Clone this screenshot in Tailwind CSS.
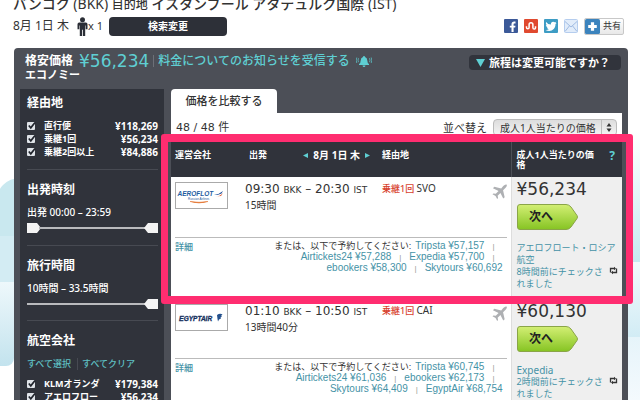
<!DOCTYPE html>
<html lang="ja">
<head>
<meta charset="utf-8">
<title>バンコク - イスタンブール</title>
<script src="https://cdn.jsdelivr.net/npm/@tailwindcss/browser@4"></script>
</head>
<body class="relative h-screen overflow-hidden bg-white font-['Noto_Sans','Noto_Sans_CJK_JP',sans-serif] text-[#333] text-[9px] leading-3">
<div class="absolute inset-0 -z-10 overflow-hidden" aria-hidden="true">
  <div class="absolute -left-1 top-[178px] h-[68px] w-12 rounded-full bg-[#c9e8ef]"></div>
  <div class="absolute left-0 top-[236px] h-[46px] w-8 bg-[#d3ecf3]"></div>
  <div class="absolute left-0 top-[282px] h-[84px] w-[14px] rounded-br-lg bg-linear-to-b from-[#eef8fb] to-[#c3e3ee]"></div>
  <div class="absolute right-0 top-[130px] h-[132px] w-3 bg-linear-to-b from-white to-[#c6eaf1]"></div>
  <div class="absolute right-0 top-[262px] h-[75px] w-3 bg-linear-to-b from-[#f2fafc] to-[#d2ecf5]"></div>
  <div class="absolute right-0 top-[337px] h-[63px] w-3 bg-linear-to-b from-[#e6f4fa] to-[#f4fafd]"></div>
</div>

<header class="pl-[13px] pr-4">
  <h1 class="-mt-1.5 h-[22px] whitespace-nowrap text-sm font-medium leading-5">バンコク <span class="font-normal">(BKK)</span> <span class="text-xs">目的地</span> イスタンブール アタテュルク国際 <span class="font-normal">(IST)</span></h1>
  <div class="flex h-5 items-center justify-between">
    <div class="flex items-center">
      <span class="text-xs">8月 1日 木</span>
      <svg class="ml-2 h-[19px] w-[11px]" viewBox="0 0 11 19" fill="#2b2e36"><circle cx="5.5" cy="2.8" r="2.5"/><path d="M2.200 5.600h6.600q1.700 0 1.700 1.700v5H8.700V8.500H8.200V19H5.900v-6.200h-.8V19H2.800V8.500H2.300v3.800H.5v-5q0-1.700 1.700-1.700z"/></svg>
      <span class="text-[11px]">x 1</span>
      <button class="ml-1.5 h-[19px] w-[118px] rounded-[4px] bg-[#2d3038] text-[10px] font-bold text-white">検索変更</button>
    </div>
    <div class="flex items-center gap-1.5">
      <a href="#" aria-label="Facebook"><svg class="size-3.5" viewBox="0 0 14 14"><rect width="14" height="14" rx="1" fill="#3b5998"/><path d="M7.500 13V8.600H5.800V6.700h1.700V5.300c0-1.900 1-2.800 2.700-2.800h1.300v1.900h-1c-.7 0-.9.3-.9.9v1.400h1.900l-.3 1.900H9.600V13z" fill="#fff"/></svg></a>
      <a href="#" aria-label="StumbleUpon"><svg class="size-3.5" viewBox="0 0 14 14"><rect width="14" height="14" rx="1" fill="#e0492f"/><path d="M2.500 7.200v1.300a1.300 1.300 0 0 0 2.600 0V5.600a1.900 1.900 0 0 1 3.800 0v3.100a1.300 1.300 0 0 0 2.600 0V7.200" fill="none" stroke="#fff" stroke-width="1.500"/></svg></a>
      <a href="#" aria-label="Twitter"><svg class="size-3.5" viewBox="0 0 14 14"><rect width="14" height="14" rx="1" fill="#3d9cc4"/><path d="M12.600 3.900l-1.200.2.900-1.300-1.500.5A2.400 2.400 0 0 0 6.900 5.600 6 6 0 0 1 2.200 2.900c-.6 1.200-.3 2.500.7 3.300l-1-.3c0 1.200.8 2.200 1.900 2.400l-1 .1c.3.9 1.100 1.500 2.200 1.600A4.600 4.600 0 0 1 1.500 11c4.900 2.800 10.200-.4 10-5.900z" fill="#fff"/></svg></a>
      <a href="#" aria-label="メール"><svg class="size-3.5" viewBox="0 0 14 14"><rect x=".5" y=".5" width="13" height="13" rx="1" fill="#e1ecfa" stroke="#b5cdee"/><path d="M1 2.500l6 5.500 6-5.500M1 12.500l4.500-5.700M13 12.500L8.500 6.800" fill="none" stroke="#9fbbe3"/></svg></a>
      <button class="flex h-[17px] w-10 items-center gap-[3px] rounded-[2px] border border-[#c8c8c8] bg-linear-to-b from-white to-[#e8e8e8] text-[9px]"><svg class="size-[15px] shrink-0" viewBox="0 0 14 14" aria-hidden="true"><rect width="14" height="14" rx="1.500" fill="#3b83bd"/><path d="M5.500 3h3v2.500H11v3H8.500V11h-3V8.500H3v-3h2.500z" fill="#fff"/></svg>共有</button>
    </div>
  </div>
</header>

<main class="ml-3.5 mr-3 mt-3 rounded-t-[4px] bg-[#4c4f57] px-1.5">
  <div class="flex h-[41px] items-start justify-between pl-[5px] pr-[1px] pt-[5px] text-white">
    <div>
      <div class="flex h-4 items-center text-xs font-bold">格安価格<strong class="ml-1.5 font-['DejaVu_Sans','Noto_Sans_CJK_JP',sans-serif] text-[17px] font-normal leading-4 text-[#5fcfd3]">¥56,234</strong>
        <a href="#" class="ml-1 flex items-center gap-1.5 border-l border-[#6d7078] pl-1 font-medium leading-3 text-[#5fcfd3]">料金についてのお知らせを受信する
          <svg class="h-[11px] w-4" viewBox="0 0 16 11" fill="#5fcfd3" aria-hidden="true"><path d="M8 0q1 0 1 1 2.300.7 2.300 3.500 0 2.500 1.700 3.500v1H3V8q1.700-1 1.700-3.500Q4.700 1.700 7 1q0-1 1-1zM6.500 9.500h3Q9.300 11 8 11T6.500 9.500z"/><path d="M2.500 2.200q-1 2 0 4M.8 1.500q-1.200 2.700 0 5.500M13.500 2.200q1 2 0 4M15.200 1.500q1.200 2.700 0 5.500" fill="none" stroke="#5fcfd3" stroke-width=".7"/></svg></a>
      </div>
      <div class="text-[11px] font-bold leading-3">エコノミー</div>
    </div>
    <button class="mt-0.5 flex h-[15px] w-[152px] items-center gap-1 rounded-[4px] bg-[#31343c] pl-[7px] text-[11px] font-bold"><svg class="h-2 w-[9px]" viewBox="0 0 9 8" aria-hidden="true"><path d="M0 0h9L4.500 8z" fill="#5fcfd3"/></svg>旅程は変更可能ですか？</button>
  </div>

  <div class="flex items-start gap-[7px]">
    <aside class="w-36 shrink-0 bg-[#30333b] pb-4 pl-[7px] pr-1.5 text-white">
      <section class="h-[81px] border-b border-[#474a52] pt-[7px]">
        <h2 class="text-xs font-bold leading-[14px]">経由地</h2>
        <div class="mt-[9px] font-bold">
          <label class="flex h-[13px] items-center text-[9px]"><input type="checkbox" checked class="sr-only"><svg class="mr-2 size-[9px]" viewBox="0 0 9 9"><rect y="1" width="8" height="8" rx="1" fill="#dfe3e8"/><path d="M1.800 4.500l2 2.300L8 1.500" fill="none" stroke="#20242c" stroke-width="1.700"/></svg>直行便<span class="ml-auto text-[10px]">¥118,269</span></label>
          <label class="flex h-[13px] items-center text-[9px]"><input type="checkbox" checked class="sr-only"><svg class="mr-2 size-[9px]" viewBox="0 0 9 9"><rect y="1" width="8" height="8" rx="1" fill="#dfe3e8"/><path d="M1.800 4.500l2 2.300L8 1.500" fill="none" stroke="#20242c" stroke-width="1.700"/></svg>乗継1回<span class="ml-auto text-[10px]">¥56,234</span></label>
          <label class="flex h-[13px] items-center text-[9px]"><input type="checkbox" checked class="sr-only"><svg class="mr-2 size-[9px]" viewBox="0 0 9 9"><rect y="1" width="8" height="8" rx="1" fill="#dfe3e8"/><path d="M1.800 4.500l2 2.300L8 1.500" fill="none" stroke="#20242c" stroke-width="1.700"/></svg>乗継2回以上<span class="ml-auto text-[10px]">¥84,886</span></label>
        </div>
      </section>
      <section class="h-[76px] border-b border-[#474a52] pt-[13px]">
        <h2 class="text-xs font-bold leading-[14px]">出発時刻</h2>
        <label for="dep" class="mt-2 block text-[10px] font-medium leading-[14px]">出発 00:00 – 23:59</label>
        <div class="relative mt-[3px] h-3">
          <svg class="absolute left-0 top-0 h-3 w-3.5" viewBox="0 0 14 12"><path d="M0 1h10l4 5-4 5H0z" fill="#f4f4f4"/></svg>
          <div class="absolute inset-x-3 top-[5px] h-0.5 bg-[#b9babd]"></div>
          <svg class="absolute right-0 top-0 h-3 w-3.5" viewBox="0 0 14 12"><path d="M14 1H4L0 6l4 5h10z" fill="#f4f4f4"/></svg>
          <input id="dep" type="range" value="100" class="absolute inset-0 w-full opacity-0">
        </div>
      </section>
      <section class="h-[75px] border-b border-[#474a52] pt-[13px]">
        <h2 class="text-xs font-bold leading-[14px]">旅行時間</h2>
        <label for="dur" class="mt-2 block text-[10px] font-medium leading-[14px]">10時間 – 33.5時間</label>
        <div class="relative mt-[3px] h-3">
          <div class="absolute left-0 right-3 top-[5px] h-0.5 bg-[#b9babd]"></div>
          <svg class="absolute right-0 top-0 h-3 w-3.5" viewBox="0 0 14 12"><path d="M14 1H4L0 6l4 5h10z" fill="#f4f4f4"/></svg>
          <input id="dur" type="range" value="100" class="absolute inset-0 w-full opacity-0">
        </div>
      </section>
      <section class="pt-[13px]">
        <h2 class="text-xs font-bold leading-[14px]">航空会社</h2>
        <div class="mt-2.5 flex font-medium text-[#5fc0c4]"><a href="#">すべて選択</a><a href="#" class="ml-1.5 border-l border-[#474a52] pl-1">すべてクリア</a></div>
        <div class="mt-[7px] font-bold">
          <label class="flex h-[13px] items-center text-[9px]"><input type="checkbox" checked class="sr-only"><svg class="mr-2 size-[9px]" viewBox="0 0 9 9"><rect y="1" width="8" height="8" rx="1" fill="#dfe3e8"/><path d="M1.800 4.500l2 2.300L8 1.500" fill="none" stroke="#20242c" stroke-width="1.700"/></svg>KLMオランダ<span class="ml-auto text-[10px]">¥179,384</span></label>
          <label class="flex h-[13px] items-center text-[9px]"><input type="checkbox" checked class="sr-only"><svg class="mr-2 size-[9px]" viewBox="0 0 9 9"><rect y="1" width="8" height="8" rx="1" fill="#dfe3e8"/><path d="M1.800 4.500l2 2.300L8 1.500" fill="none" stroke="#20242c" stroke-width="1.700"/></svg>アエロフロー<span class="ml-auto text-[10px]">¥56,234</span></label>
        </div>
      </section>
    </aside>

    <div class="min-w-0 flex-1">
      <div class="flex"><a href="#" class="flex h-6 w-[106px] items-center justify-center rounded-t-[4px] bg-white text-[11px] font-medium">価格を比較する</a></div>
      <div class="flex h-[29px] items-center justify-between bg-white px-[5px]">
        <span class="font-['DejaVu_Sans','Noto_Sans_CJK_JP',sans-serif] text-[11px]">48 / 48 件</span>
        <div class="flex items-center gap-1.5">
          <label for="sort" class="text-[11px]">並べ替え</label>
          <div class="relative">
            <select id="sort" class="block h-[17px] w-[124px] appearance-none rounded-[4px] border border-[#bbb] bg-linear-to-b from-[#ddd] to-[#f4f4f4] pl-1.5 text-[10px] leading-[14px]"><option>成人1人当たりの価格</option></select>
            <svg class="pointer-events-none absolute right-0 top-0 h-[17px] w-4" viewBox="0 0 16 17" aria-hidden="true"><path d="M.5 1v15" stroke="#bbb"/><path d="M5.500 7.500L8 4l2.500 3.500zM5.500 9.500L8 13l2.500-3.500z" fill="#333"/></svg>
          </div>
        </div>
      </div>
      <div class="relative">
        <table class="w-full table-fixed border-collapse bg-white text-left">
          <colgroup><col class="w-[74px]"><col class="w-[137px]"><col><col class="w-[111px]"></colgroup>
          <thead class="bg-[#30333b] text-white">
            <tr class="h-[35px] align-top">
              <th class="pl-1 pt-[7px]">運営会社</th>
              <th class="pt-[7px]"><div class="flex items-center justify-between pl-1 pr-3">出発<span class="flex items-center gap-[5px] text-[10px]"><svg class="size-[5px]" viewBox="0 0 5 5"><path d="M5 0v5L0 2.500z" fill="#5fcfd3"/></svg>8月 1日 木<svg class="size-[5px]" viewBox="0 0 5 5"><path d="M0 0v5l5-2.500z" fill="#5fcfd3"/></svg></span></div></th>
              <th class="pt-[7px]">経由地</th>
              <th class="border-l border-[#4c4f57] pl-[5px] pr-[7px] pt-2"><div class="flex items-start justify-between leading-[10px]"><span class="whitespace-nowrap">成人1人当たりの価<br>格</span><a href="#" class="text-xs leading-3 text-[#5fcfd3]">?</a></div></th>
            </tr>
          </thead>
          <tbody class="border-b border-[#ccc] align-top">
            <tr class="h-[60px]">
              <td class="pl-1 pt-[5px]"><svg class="h-[27px] w-[53px]" viewBox="0 0 53 27" role="img" aria-label="Aeroflot"><rect x=".5" y=".5" width="52" height="26" fill="#fff" stroke="#aaa"/><text x="2.500" y="14" font-family="Liberation Sans, sans-serif" font-size="6.500" font-weight="bold" font-style="italic" fill="#1d5ca0">AEROFLOT</text><path d="M39 13q5-.5 9-4l-1.500 2.500-4 1.500z" fill="#1d4f9a"/><path d="M40 14.500q5 0 8-3.500l-2 3z" fill="#e2572b"/><text x="13" y="18" font-family="Liberation Sans, sans-serif" font-size="3" fill="#1d5ca0">Russian Airlines</text><path d="M15 19.500q9 3 18 0-9 1.500-18 0z" fill="#e2702b" stroke="#e2702b" stroke-width=".5"/></svg></td>
              <td class="pt-[5px]"><div class="font-['DejaVu_Sans',sans-serif] text-xs leading-[14px]">09:30 <span class="text-[9px]">BKK</span> – 20:30 <span class="text-[9px]">IST</span></div><div class="mt-0.5 text-[10px]">15時間</div></td>
              <td class="pr-1 pt-[5px]"><div class="flex justify-between"><span><span class="font-medium text-[#d8432f]">乗継1回</span> <span class="text-[10px]">SVO</span></span><svg class="mt-0.5 size-[15px]" viewBox="0 0 16 16" fill="#aeb0b3" aria-hidden="true"><path d="M15.500.5q1 1.500-1 3.500l-2.700 2.700 1.700 7.300-1.500 1.500-3-6-3 3 .5 2.500-1 1-1.700-3.300L.5 11l1-1 2.500.5 3-3-6-3L2.500 3l7.300 1.700L12 2q2-2 3.500-1.500z"/></svg></div></td>
              <td rowspan="2" class="border-l border-[#ddd] bg-[#efefef] pl-[5px] pr-1 pt-1">
                <div class="font-['DejaVu_Sans','Noto_Sans_CJK_JP',sans-serif] text-[17px] leading-4">¥56,234</div>
                <button class="relative mt-[7px] block h-[26px] w-[61px] text-xs font-bold text-[#222]"><svg class="absolute inset-0 h-[26px] w-[61px]" viewBox="0 0 61 26" aria-hidden="true"><defs><linearGradient id="go" x2="0" y2="1"><stop stop-color="#d3ef74"/><stop offset="1" stop-color="#86c423"/></linearGradient></defs><path d="M3 .5h46q3 0 5 2.500l6 8.500q1 1.500 0 3L54 23q-2 2.500-5 2.500H3Q.5 25.500.5 23V3Q.5.500 3 .5z" fill="url(#go)" stroke="#8aa548"/></svg><span class="relative pr-3">次へ</span></button>
                <div class="mt-3 text-[#4592a6]"><a href="#" class="block whitespace-nowrap">アエロフロート・ロシア<br>航空</a><div class="flex items-start justify-between"><span class="whitespace-nowrap">8時間前にチェックさ<br>れました</span><button aria-label="更新"><svg class="size-[9px]" viewBox="0 0 9 9" fill="none" stroke="#333" stroke-width="1.300"><path d="M1.500 6.500v-4H6M7.500 2.500v4H3"/><path d="M5 .7L7 2.500 5 4.300zM4 4.700L2 6.500l2 1.800z" fill="#333" stroke="none"/></svg></button></div></div>
              </td>
            </tr>
            <tr class="h-[61px]">
              <td colspan="3" class="px-1"><div class="flex justify-between border-t border-[#bbb] pt-[3px] text-[#4592a6]"><a href="#" class="font-medium">詳細</a>
                <div class="whitespace-nowrap pr-1 text-right font-['Liberation_Sans','Noto_Sans_CJK_JP',sans-serif] text-[10px] leading-[10px]">
                  <div class="pr-2"><span class="mr-1 text-[9px] text-[#333]">または、以下で予約してください:</span><a href="#">Tripsta ¥57,157</a><span class="ml-2 text-[8px] text-[#999]">|</span></div>
                  <div class="pr-2"><a href="#">Airtickets24 ¥57,288</a><span class="mx-2 text-[8px] text-[#999]">|</span><a href="#">Expedia ¥57,700</a><span class="ml-2 text-[8px] text-[#999]">|</span></div>
                  <div><a href="#">ebookers ¥58,300</a><span class="mx-2 text-[8px] text-[#999]">|</span><a href="#">Skytours ¥60,692</a></div>
                </div></div></td>
            </tr>
          </tbody>
          <tbody class="align-top">
            <tr class="h-[60px]">
              <td class="pl-1 pt-[5px]"><svg class="h-[27px] w-[53px]" viewBox="0 0 53 27" role="img" aria-label="EgyptAir"><rect x=".5" y=".5" width="52" height="26" fill="#fff" stroke="#aaa"/><text x="4" y="17" font-family="Liberation Sans, sans-serif" font-size="7" font-weight="bold" font-style="italic" fill="#16305e" stroke="#16305e" stroke-width=".3">E<tspan font-size="6.500">GYPTAIR</tspan></text><path d="M42 11q3-2 5.500-.5L46 12l1 .5-1.500 1 .5 1-2 1-1 2-.5-2.500z" fill="#24508c"/></svg></td>
              <td class="pt-[5px]"><div class="font-['DejaVu_Sans',sans-serif] text-xs leading-[14px]">01:10 <span class="text-[9px]">BKK</span> – 10:50 <span class="text-[9px]">IST</span></div><div class="mt-0.5 text-[10px]">13時間40分</div></td>
              <td class="pr-1 pt-[5px]"><div class="flex justify-between"><span><span class="font-medium text-[#d8432f]">乗継1回</span> <span class="text-[10px]">CAI</span></span><svg class="mt-0.5 size-[15px]" viewBox="0 0 16 16" fill="#aeb0b3" aria-hidden="true"><path d="M15.500.5q1 1.500-1 3.500l-2.700 2.700 1.700 7.300-1.500 1.500-3-6-3 3 .5 2.500-1 1-1.700-3.300L.5 11l1-1 2.500.5 3-3-6-3L2.500 3l7.300 1.700L12 2q2-2 3.500-1.500z"/></svg></div></td>
              <td rowspan="2" class="border-l border-[#ddd] bg-[#efefef] pl-[5px] pr-1 pt-1">
                <div class="font-['DejaVu_Sans','Noto_Sans_CJK_JP',sans-serif] text-[17px] leading-4">¥60,130</div>
                <button class="relative mt-[7px] block h-[26px] w-[61px] text-xs font-bold text-[#222]"><svg class="absolute inset-0 h-[26px] w-[61px]" viewBox="0 0 61 26" aria-hidden="true"><path d="M3 .5h46q3 0 5 2.500l6 8.500q1 1.500 0 3L54 23q-2 2.500-5 2.500H3Q.5 25.500.5 23V3Q.5.500 3 .5z" fill="url(#go)" stroke="#8aa548"/></svg><span class="relative pr-3">次へ</span></button>
                <div class="mt-3 text-[#4592a6]"><a href="#" class="block text-[10px]">Expedia</a><div class="flex items-start justify-between"><span class="whitespace-nowrap">2時間前にチェックさ<br>れました</span><button aria-label="更新"><svg class="size-[9px]" viewBox="0 0 9 9" fill="none" stroke="#333" stroke-width="1.300"><path d="M1.500 6.500v-4H6M7.500 2.500v4H3"/><path d="M5 .7L7 2.500 5 4.300zM4 4.700L2 6.500l2 1.800z" fill="#333" stroke="none"/></svg></button></div></div>
              </td>
            </tr>
            <tr class="h-[61px]">
              <td colspan="3" class="px-1"><div class="flex justify-between border-t border-[#bbb] pt-[3px] text-[#4592a6]"><a href="#" class="font-medium">詳細</a>
                <div class="whitespace-nowrap pr-1 text-right font-['Liberation_Sans','Noto_Sans_CJK_JP',sans-serif] text-[10px] leading-[10px]">
                  <div class="pr-2"><span class="mr-1 text-[9px] text-[#333]">または、以下で予約してください:</span><a href="#">Tripsta ¥60,745</a><span class="ml-2 text-[8px] text-[#999]">|</span></div>
                  <div class="pr-2"><a href="#">Airtickets24 ¥61,036</a><span class="mx-2 text-[8px] text-[#999]">|</span><a href="#">ebookers ¥62,173</a><span class="ml-2 text-[8px] text-[#999]">|</span></div>
                  <div><a href="#">Skytours ¥64,409</a><span class="mx-2 text-[8px] text-[#999]">|</span><a href="#">EgyptAir ¥68,754</a></div>
                </div></div></td>
            </tr>
          </tbody>
        </table>
        <div class="pointer-events-none absolute -left-[10px] -right-[11px] -top-2 h-[170px] rounded-[3px] border-x-[7px] border-y-8 border-[#ff2d70]"></div>
      </div>
    </div>
  </div>
</main>
</body>
</html>
